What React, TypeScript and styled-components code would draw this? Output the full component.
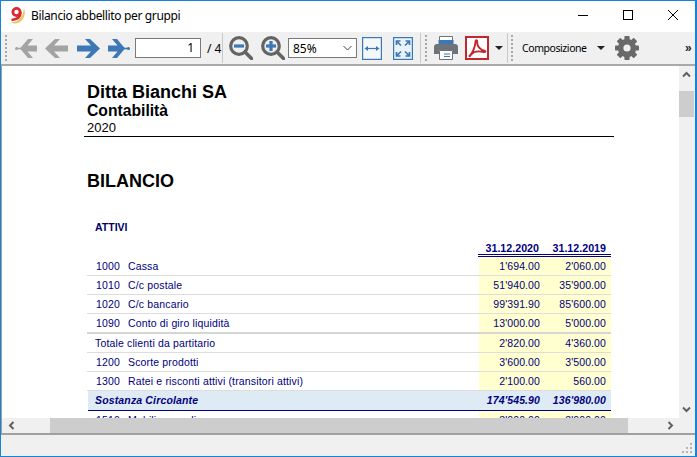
import React from 'react';
import styled, { createGlobalStyle } from 'styled-components';

const GlobalStyle = createGlobalStyle`
  html, body {
    margin: 0;
    padding: 0;
    background: #fff;
  }
  * {
    box-sizing: border-box;
  }
`;

const Window = styled.div`
  width: 697px;
  height: 457px;
  display: flex;
  flex-direction: column;
  border: 1px solid #1584d8;
  border-right-width: 2px;
  background: #fff;
  overflow: hidden;
  font-family: 'Noto Sans', 'Open Sans', sans-serif;
`;

const TitleBar = styled.div`
  height: 31px;
  flex: none;
  display: flex;
  align-items: center;
  padding-left: 9px;
  padding-bottom: 2px;
`;

const TitleText = styled.span`
  margin-left: 5px;
  font-size: 12px;
  letter-spacing: -0.35px;
  color: #000;
  flex: 1;
`;

const WinButton = styled.div`
  width: 45px;
  height: 28px;
  align-self: flex-start;
  display: flex;
  align-items: center;
  justify-content: center;
`;

const Toolbar = styled.div`
  height: 34px;
  flex: none;
  display: flex;
  align-items: center;
  background: #f0f0f0;
  border-bottom: 2px solid #a9a9a9;
  padding-left: 4px;
`;

const Slot = styled.div<{ $w: number; $ml?: number }>`
  flex: none;
  width: ${p => p.$w}px;
  margin-left: ${p => p.$ml ?? 0}px;
  display: flex;
  align-items: center;
  justify-content: center;
`;

const Grip = styled.div<{ $ml?: number }>`
  flex: none;
  width: 3px;
  height: 26px;
  margin-left: ${p => p.$ml ?? 0}px;
  background-image: radial-gradient(circle at 1px 1px, #a8a8a8 1px, transparent 1px);
  background-size: 3px 4px;
`;

const Divider = styled.div<{ $ml: number }>`
  flex: none;
  width: 1px;
  height: 30px;
  margin-left: ${p => p.$ml}px;
  background: #c8c8c8;
`;

const PageInput = styled.div`
  flex: none;
  width: 66px;
  height: 20px;
  margin-left: 5px;
  border: 1px solid #7a7a7a;
  background: #fff;
  text-align: right;
  padding: 1px 6px 0 0;
  font-size: 12px;
  line-height: 15px;
  color: #000;
`;

const PageTotal = styled.span`
  flex: none;
  width: 15px;
  margin-left: 6px;
  font-size: 12px;
  color: #000;
  white-space: nowrap;
`;

const ZoomSelect = styled.div`
  flex: none;
  width: 69px;
  height: 20px;
  margin-left: 3px;
  border: 1px solid #7a7a7a;
  background: #fff;
  display: flex;
  align-items: center;
  justify-content: space-between;
  padding: 0 4px 0 4px;
  font-size: 12px;
  color: #000;
`;

const ToolLabel = styled.span`
  flex: none;
  width: 65px;
  margin-left: 8px;
  font-size: 10.5px;
  letter-spacing: -0.43px;
  color: #000;
  white-space: nowrap;
`;

const Caret = styled.div<{ $ml: number }>`
  flex: none;
  width: 0;
  height: 0;
  margin-left: ${p => p.$ml}px;
  border-left: 4px solid transparent;
  border-right: 4px solid transparent;
  border-top: 4px solid #222;
`;

const Chevrons = styled.span`
  flex: none;
  margin-left: 46px;
  font-family: 'Liberation Sans', sans-serif;
  font-size: 12px;
  font-weight: bold;
  color: #222;
`;

const ViewerRow = styled.div`
  flex: 1;
  min-height: 0;
  display: flex;
`;

const DocArea = styled.div`
  flex: 1;
  min-width: 0;
  overflow: hidden;
  padding: 16px 0 0 85px;
  border-left: 1px solid #a0a0a0;
  background: #fff;
  font-family: 'Liberation Sans', Arial, sans-serif;
`;

const CompanyName = styled.div`
  font-size: 18px;
  font-weight: bold;
  line-height: 20px;
  color: #000;
`;

const SubTitle = styled.div`
  font-size: 15.7px;
  font-weight: bold;
  line-height: 18px;
  color: #000;
`;

const YearLine = styled.div`
  width: 530px;
  margin-left: -3px;
  padding-left: 3px;
  font-size: 13px;
  line-height: 15px;
  height: 17px;
  color: #000;
  border-bottom: 1px solid #000;
`;

const ReportTitle = styled.div`
  margin-top: 34px;
  font-size: 18px;
  font-weight: bold;
  line-height: 21px;
  color: #000;
`;

const SectionTitle = styled.div`
  margin-top: 29px;
  padding-left: 8px;
  font-size: 10.5px;
  font-weight: bold;
  line-height: 13px;
  color: #000066;
`;

const Table = styled.div`
  width: 524px;
  margin-top: 6px;
  color: #000080;
  font-size: 10.5px;
`;

const HeadRow = styled.div`
  display: grid;
  grid-template-columns: 391px 66px 67px;
  height: 17px;
  align-items: center;
  font-weight: bold;
  font-size: 10.7px;
`;

const HeadCell = styled.div`
  height: 17px;
  line-height: 17px;
  padding-right: 5px;
  text-align: right;
  border-bottom: 3px double #000080;
`;

const Row = styled.div<{ $sum?: boolean; $thick?: boolean }>`
  display: grid;
  grid-template-columns: ${p => (p.$sum ? 391 : 392)}px 66px 66px;
  margin-left: ${p => (p.$sum ? 1 : 0)}px;
  height: ${p => (p.$sum || p.$thick ? 20 : 19)}px;
  line-height: 18px;
  font-weight: ${p => (p.$sum ? 'bold' : 'normal')};
  font-style: ${p => (p.$sum ? 'italic' : 'normal')};
  background: ${p => (p.$sum ? '#deebf4' : 'transparent')};
  border-bottom: ${p =>
    p.$sum ? '1px solid #000080' : p.$thick ? '2px solid #d6d6d6' : '1px solid #dddddd'};
`;

const LabelCell = styled.div<{ $indent?: boolean; $sum?: boolean }>`
  padding-left: ${p => (p.$sum ? 7 : p.$indent ? 9 : 8)}px;
  display: flex;
  white-space: nowrap;
  letter-spacing: 0.15px;
`;

const Code = styled.span`
  width: 32px;
  flex: none;
`;

const AmountCell = styled.div<{ $sum?: boolean }>`
  text-align: right;
  padding-right: 5px;
  letter-spacing: 0.1px;
  background: ${p => (p.$sum ? 'transparent' : '#ffffcf')};
`;

const VScroll = styled.div`
  flex: none;
  width: 16px;
  background: #f0f0f0;
  position: relative;
  display: flex;
  flex-direction: column;
  align-items: center;
  justify-content: space-between;
  padding: 4px 1px 4px 0;
`;

const VThumb = styled.div`
  position: absolute;
  left: 0;
  top: 25px;
  width: 15px;
  height: 26px;
  background: #cdcdcd;
`;

const HScroll = styled.div`
  flex: none;
  height: 17px;
  display: grid;
  grid-template-columns: 48px 578px 1fr;
  align-items: stretch;
  background: #f0f0f0;
  border-left: 1px solid #a0a0a0;
  border-bottom: 2px solid #a0a0a0;
`;

const HThumb = styled.div`
  background: #cdcdcd;
`;

const ArrowCell = styled.div<{ $right?: boolean }>`
  display: flex;
  align-items: center;
  justify-content: ${p => (p.$right ? 'flex-end' : 'flex-start')};
  padding: ${p => (p.$right ? '0 20px 0 0' : '0 0 0 5px')};
`;

const StatusBar = styled.div`
  flex: 1 0 21px;
  max-height: 21px;
  background: #f0f0f0;
  display: flex;
  justify-content: flex-end;
  align-items: flex-end;
  padding: 0 2px 2px 0;
`;

const GRAY = '#a3a3a3';
const BLUE = '#3b78b5';

// long arrow, points left unless flipped
const Arrow = ({ color, right }: { color: string; right?: boolean }) => (
  <svg width="23" height="19" viewBox="0 0 23 19">
    <g transform={right ? 'translate(23 0) scale(-1 1)' : undefined}>
      <path d="M0 9.5 L10 0 H15 L9 6.5 H23 V12.5 H9 L15 19 H10 Z" fill={color} />
    </g>
  </svg>
);

// arrow that stops at a dot, for first and last page
const StopArrow = ({ color, right }: { color: string; right?: boolean }) => (
  <svg width="22" height="19" viewBox="0 0 22 19">
    <g transform={right ? 'translate(22 0) scale(-1 1)' : undefined}>
      <circle cx="1.5" cy="9.5" r="1.5" fill={color} />
      <rect x="1" y="8.7" width="6" height="1.6" fill={color} />
      <path d="M5 9.5 L13 0 H18 L12.5 6.5 H22 V12.5 H12.5 L18 19 H13 Z" fill={color} />
    </g>
  </svg>
);

const Magnifier = ({ plus }: { plus?: boolean }) => (
  <svg width="24" height="24" viewBox="0 0 24 24">
    <circle cx="10" cy="10" r="8.3" fill="#efefef" stroke="#646464" strokeWidth="3.2" />
    <path d="M16 16 L22.5 22.5" stroke="#646464" strokeWidth="3.6" strokeLinecap="round" />
    <rect x="5" y="8.4" width="10" height="3.2" fill={BLUE} />
    {plus && <rect x="8.4" y="5" width="3.2" height="10" fill={BLUE} />}
  </svg>
);

const FitWidth = () => (
  <svg width="20" height="23" viewBox="0 0 20 23">
    <rect x="0.6" y="0.6" width="18.8" height="21.8" fill="#f5f8fb" stroke={BLUE} strokeWidth="1.2" />
    <path d="M4 11.5 H16" stroke={BLUE} strokeWidth="1.2" />
    <path d="M2.5 11.5 L6 9 V14 Z M17.5 11.5 L14 9 V14 Z" fill={BLUE} />
  </svg>
);

const FitPage = () => (
  <svg width="20" height="23" viewBox="0 0 20 23">
    <rect x="0.6" y="0.6" width="18.8" height="21.8" fill="#eaf2fa" stroke={BLUE} strokeWidth="1.2" />
    <g fill="none" stroke={BLUE} strokeWidth="1.7">
      <path d="M3.5 8 V4 H7.5 M3.5 4 L8 8.5" />
      <path d="M16.5 8 V4 H12.5 M16.5 4 L12 8.5" />
      <path d="M3.5 15 V19 H7.5 M3.5 19 L8 14.5" />
      <path d="M16.5 15 V19 H12.5 M16.5 19 L12 14.5" />
    </g>
  </svg>
);

const Printer = () => (
  <svg width="24" height="24" viewBox="0 0 24 24">
    <path d="M5.5 0.5 H18.5 V8 H5.5 Z" fill="#fff" stroke="#6d7378" />
    <path d="M4.5 4 H19.5 V9 H4.5 Z" fill={BLUE} />
    <path d="M3 8 H21 Q24 8 24 11 V18 H19 V14 H5 V18 H0 V11 Q0 8 3 8 Z" fill="#6d7378" />
    <path d="M5.5 14.5 H18.5 V23.5 H5.5 Z" fill="#fff" stroke="#6d7378" />
    <path d="M10 18 H16 M10 20.5 H16" stroke={BLUE} />
  </svg>
);

const PdfIcon = () => (
  <svg width="24" height="24" viewBox="0 0 24 24">
    <rect x="1" y="1" width="22" height="22" fill="#fff" stroke="#c1272d" strokeWidth="2" />
    <path
      d="M4.5 20 C7 18 10 12 10.5 6 C10.6 3.5 12.5 3.8 12.2 6.5 C12 10 15 14 20 15 C21 15.5 20 16.5 18.5 16 C14 15 9 15.5 6.5 18 C5.5 19.5 4.5 21 4.5 20 Z"
      fill="none"
      stroke="#c1272d"
      strokeWidth="1.9"
    />
  </svg>
);

const Gear = () => (
  <svg width="24" height="24" viewBox="0 0 24 24">
    <g fill="#696969">
      {[0, 45, 90, 135].map(a => (
        <rect key={a} x="9.4" y="0" width="5.2" height="24" rx="0.8" transform={`rotate(${a} 12 12)`} />
      ))}
    </g>
    <circle cx="12" cy="12" r="7" fill="none" stroke="#696969" strokeWidth="4.4" />
    <circle cx="12" cy="12" r="3.6" fill="#f0f0f0" />
  </svg>
);

const Logo = () => (
  <svg width="16" height="17" viewBox="0 0 16 17">
    <path d="M1 15 C8 15.5 13 11 14 1 C16.5 8 13 15.5 6 16.5 C4 16.7 2 16 1 15 Z" fill="#e8c766" />
    <circle cx="6.5" cy="5" r="3.6" fill="none" stroke="#dc2832" strokeWidth="2.8" />
    <path d="M10.6 5 C10.6 10 7 12.5 1.5 13" fill="none" stroke="#dc2832" strokeWidth="2.6" />
  </svg>
);

const Chevron = ({ dir }: { dir: 'up' | 'down' | 'left' | 'right' }) => {
  const rot = { up: 0, right: 90, down: 180, left: 270 }[dir];
  return (
    <svg width="9" height="9" viewBox="0 0 9 9">
      <path d="M1 6.5 L4.5 3 L8 6.5" fill="none" stroke="#606060" strokeWidth="2" transform={`rotate(${rot} 4.5 4.5)`} />
    </svg>
  );
};

const rows = [
  { code: '1000', name: 'Cassa', a: "1'694.00", b: "2'060.00" },
  { code: '1010', name: 'C/c postale', a: "51'940.00", b: "35'900.00" },
  { code: '1020', name: 'C/c bancario', a: "99'391.90", b: "85'600.00" },
  { code: '1090', name: 'Conto di giro liquidità', a: "13'000.00", b: "5'000.00", thick: true },
  { name: 'Totale clienti da partitario', a: "2'820.00", b: "4'360.00" },
  { code: '1200', name: 'Scorte prodotti', a: "3'600.00", b: "3'500.00" },
  { code: '1300', name: 'Ratei e risconti attivi (transitori attivi)', a: "2'100.00", b: '560.00' },
  { name: 'Sostanza Circolante', a: "174'545.90", b: "136'980.00", sum: true },
  { code: '1510', name: 'Mobili e arredi', a: "3'000.00", b: "3'000.00" },
];

const App = () => (
  <Window>
    <GlobalStyle />
    <TitleBar>
      <Logo />
      <TitleText>Bilancio abbellito per gruppi</TitleText>
      <WinButton>
        <svg width="10" height="10" viewBox="0 0 10 10">
          <path d="M0 5.5 H10" stroke="#000" />
        </svg>
      </WinButton>
      <WinButton>
        <svg width="10" height="10" viewBox="0 0 10 10">
          <rect x="0.5" y="0.5" width="9" height="9" fill="none" stroke="#000" />
        </svg>
      </WinButton>
      <WinButton>
        <svg width="10" height="10" viewBox="0 0 10 10">
          <path d="M0 0 L10 10 M10 0 L0 10" stroke="#000" />
        </svg>
      </WinButton>
    </TitleBar>
    <Toolbar>
      <Grip />
      <Slot $w={22} $ml={7}><StopArrow color={GRAY} /></Slot>
      <Slot $w={23} $ml={8}><Arrow color={GRAY} /></Slot>
      <Slot $w={23} $ml={9}><Arrow color={BLUE} right /></Slot>
      <Slot $w={22} $ml={8}><StopArrow color={BLUE} right /></Slot>
      <PageInput>1</PageInput>
      <PageTotal>/ 4</PageTotal>
      <Divider $ml={0} />
      <Slot $w={24} $ml={6}><Magnifier /></Slot>
      <Slot $w={24} $ml={8}><Magnifier plus /></Slot>
      <ZoomSelect>
        85%
        <svg width="9" height="6" viewBox="0 0 9 6">
          <path d="M0.5 1 L4.5 5 L8.5 1" fill="none" stroke="#444" />
        </svg>
      </ZoomSelect>
      <Slot $w={20} $ml={5}><FitWidth /></Slot>
      <Slot $w={20} $ml={11}><FitPage /></Slot>
      <Divider $ml={7} />
      <Grip $ml={4} />
      <Slot $w={24} $ml={6}><Printer /></Slot>
      <Slot $w={24} $ml={7}><PdfIcon /></Slot>
      <Caret $ml={6} />
      <Divider $ml={4} />
      <Grip $ml={3} />
      <ToolLabel>Composizione</ToolLabel>
      <Caret $ml={10} />
      <Slot $w={24} $ml={10}><Gear /></Slot>
      <Chevrons>»</Chevrons>
    </Toolbar>
    <ViewerRow>
      <DocArea>
        <CompanyName>Ditta Bianchi SA</CompanyName>
        <SubTitle>Contabilità</SubTitle>
        <YearLine>2020</YearLine>
        <ReportTitle>BILANCIO</ReportTitle>
        <SectionTitle>ATTIVI</SectionTitle>
        <Table>
          <HeadRow>
            <div />
            <HeadCell>31.12.2020</HeadCell>
            <HeadCell>31.12.2019</HeadCell>
          </HeadRow>
          {rows.map(r => (
            <Row key={r.name} $sum={r.sum} $thick={r.thick}>
              <LabelCell $indent={!!r.code} $sum={r.sum}>
                {r.code && <Code>{r.code}</Code>}
                {r.name}
              </LabelCell>
              <AmountCell $sum={r.sum}>{r.a}</AmountCell>
              <AmountCell $sum={r.sum}>{r.b}</AmountCell>
            </Row>
          ))}
        </Table>
      </DocArea>
      <VScroll>
        <Chevron dir="up" />
        <VThumb />
        <Chevron dir="down" />
      </VScroll>
    </ViewerRow>
    <HScroll>
      <ArrowCell><Chevron dir="left" /></ArrowCell>
      <HThumb />
      <ArrowCell $right><Chevron dir="right" /></ArrowCell>
    </HScroll>
    <StatusBar>
      <svg width="11" height="11" viewBox="0 0 11 11">
        <g fill="#b5b5b5">
          <rect x="8" y="0" width="2" height="2" />
          <rect x="4" y="4" width="2" height="2" />
          <rect x="8" y="4" width="2" height="2" />
          <rect x="0" y="8" width="2" height="2" />
          <rect x="4" y="8" width="2" height="2" />
          <rect x="8" y="8" width="2" height="2" />
        </g>
      </svg>
    </StatusBar>
  </Window>
);

export default App;
